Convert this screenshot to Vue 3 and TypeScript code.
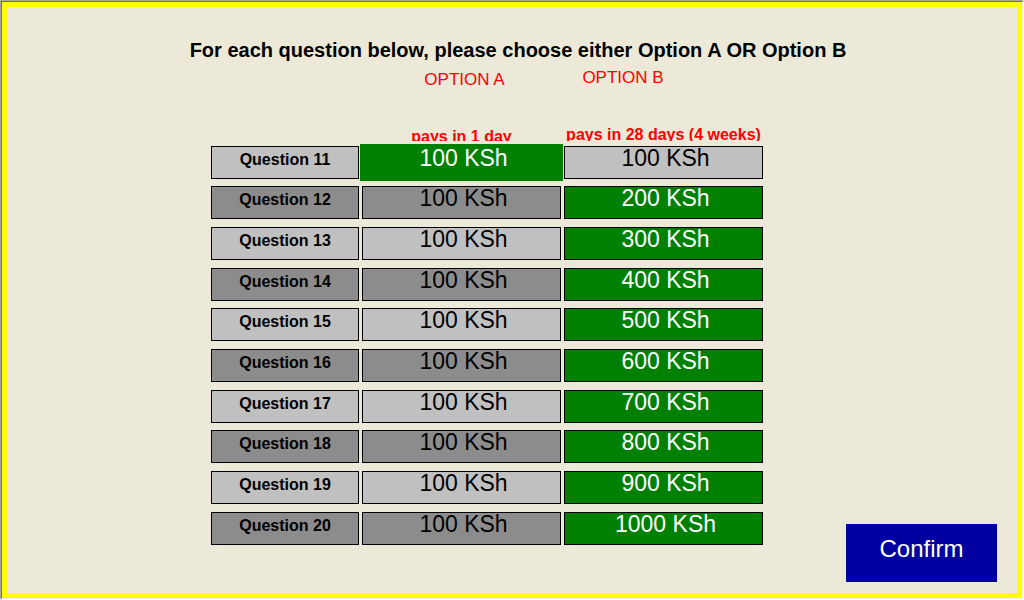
<script setup lang="ts">
import { ref } from 'vue'

type Option = 'A' | 'B'

interface Question {
  id: number
  optionA: number
  optionB: number
  choice: Option
}

const questions = ref<Question[]>(
  Array.from({ length: 10 }, (_, i) => ({
    id: 11 + i,
    optionA: 100,
    optionB: 100 * (i + 1),
    choice: i === 0 ? 'A' : 'B',
  })),
)

const current = ref<string>('11A')
const confirmed = ref<boolean>(false)

function choose(question: Question, option: Option): void {
  question.choice = option
  current.value = `${question.id}${option}`
}
</script>

<template>
  <div class="window">
    <main class="sheet">
      <h1 class="title">For each question below, please choose either Option A OR Option B</h1>
      <div class="choices">
        <table class="table">
          <thead>
            <tr class="row head">
              <td></td>
              <th scope="col" class="option option-a">
                <span class="name">OPTION A</span>
                <span class="terms">pays in 1 day</span>
              </th>
              <th scope="col" class="option option-b">
                <span class="name">OPTION B</span>
                <span class="terms">pays in 28 days (4 weeks)</span>
              </th>
            </tr>
          </thead>
          <tbody>
            <tr v-for="q in questions" :key="q.id" class="row line">
              <th scope="row" class="label">Question {{ q.id }}</th>
              <td>
                <button
                  type="button"
                  class="amount"
                  :class="{ chosen: q.choice === 'A', current: current === q.id + 'A' }"
                  :aria-pressed="q.choice === 'A'"
                  @click="choose(q, 'A')"
                >{{ q.optionA }} KSh</button>
              </td>
              <td>
                <button
                  type="button"
                  class="amount"
                  :class="{ chosen: q.choice === 'B', current: current === q.id + 'B' }"
                  :aria-pressed="q.choice === 'B'"
                  @click="choose(q, 'B')"
                >{{ q.optionB }} KSh</button>
              </td>
            </tr>
          </tbody>
        </table>
      </div>
      <button type="button" class="confirm" :disabled="confirmed" @click="confirmed = true">Confirm</button>
    </main>
  </div>
</template>

<style>
body {
  background: #ffffff;
}
</style>

<style scoped>
.window {
  box-sizing: border-box;
  min-height: 100vh;
  display: flex;
  border: 1px solid;
  border-color: #aca899 #ffffff #ffffff #aca899;
  font-family: "Liberation Sans", Arial, sans-serif;
  color: #000000;
}

.sheet {
  flex: 1;
  display: grid;
  grid-template-columns: 1fr;
  grid-template-rows: auto 1fr;
  border: 1px solid;
  border-color: #716f64 #f1efe2 #f1efe2 #716f64;
  box-shadow: inset 0 0 0 5px #ffff00;
  background: #ece9d8;
  padding: 36px 25px 16px;
}

.title {
  margin: 0;
  padding-left: 12px;
  font-size: 20px;
  line-height: 24px;
  font-weight: bold;
  text-align: center;
}

.choices {
  grid-area: 2 / 1;
  display: flex;
  justify-content: center;
  align-items: flex-start;
  padding-right: 50px;
}

.table,
.table thead,
.table tbody {
  display: block;
}

.row {
  display: grid;
  grid-template-columns: 148px 199px 199px;
  column-gap: 3px;
}

.row th,
.row td {
  padding: 0;
}

.option {
  height: 79px;
  display: flex;
  flex-direction: column;
  justify-content: space-between;
  color: #ff0000;
  font-size: 16px;
  line-height: 20px;
}

.option .name {
  font-size: 17px;
  font-weight: normal;
}

.option-a .name {
  padding: 8px 0 0 6px;
}

.option-b .name {
  padding: 6px 81px 0 0;
}

.terms {
  height: 14px;
  line-height: 16px;
  overflow: hidden;
  white-space: nowrap;
}

.option-a .terms {
  height: 12px;
}

.head {
  margin-bottom: 5px;
}

.line {
  margin-bottom: 8px;
}

.line:nth-child(3n + 1) {
  margin-bottom: 7px;
}

.line:last-child {
  margin-bottom: 0;
}

.label,
.amount {
  box-sizing: border-box;
  width: 100%;
  height: 33px;
  border: 1px solid #000000;
  background: #c0c0c0;
  text-align: center;
}

.label {
  font-size: 16px;
  line-height: 25px;
  font-weight: bold;
}

.amount {
  display: block;
  margin: 0;
  padding: 0 0 8px 4px;
  border-radius: 0;
  font-family: inherit;
  font-size: 23px;
  line-height: 23px;
  color: #000000;
  cursor: pointer;
}

.line:nth-child(even) .label,
.line:nth-child(even) .amount {
  background: #8c8c8c;
}

.line .amount.chosen {
  background: #008000;
  color: #ffffff;
}

.amount.current {
  border-color: #008000;
  outline: 2px solid #008000;
}

.confirm {
  grid-area: 2 / 1;
  place-self: end;
  width: 151px;
  height: 58px;
  padding: 0 0 8px;
  border: 0;
  border-radius: 0;
  background: #0000a0;
  color: #ffffff;
  font-family: inherit;
  font-size: 24px;
  line-height: 28px;
  cursor: pointer;
}
</style>
